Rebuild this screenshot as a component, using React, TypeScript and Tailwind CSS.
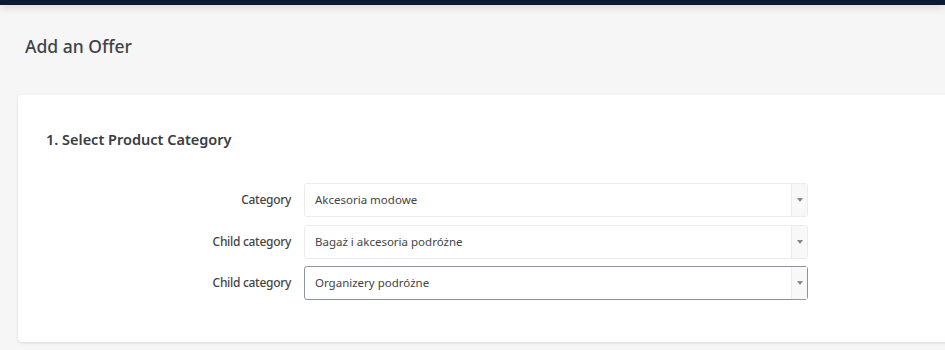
type Row = { label: string; value: string; active?: boolean };

const rows: Row[] = [
  { label: "Category", value: "Akcesoria modowe" },
  { label: "Child category", value: "Bagaż i akcesoria podróżne" },
  { label: "Child category", value: "Organizery podróżne", active: true },
];

function SelectBox({ value, active }: { value: string; active?: boolean }) {
  return (
    <div
      className={`flex h-[34px] w-[504px] items-stretch rounded-[3px] border bg-white ${
        active ? "border-[#8a94a3]" : "border-[#ececec]"
      }`}
    >
      <div className="flex flex-1 items-center pl-[10px] text-[11.5px] text-[#444]">{value}</div>
      <div className="flex w-[16px] items-center justify-center border-l border-[#ececec] bg-[#f8f8f8]">
        <svg width="6" height="4" viewBox="0 0 6 4">
          <path d="M0 0h6L3 4z" fill="#888" />
        </svg>
      </div>
    </div>
  );
}

export default function App() {
  return (
    <div
      className="min-h-[350px] w-full overflow-hidden bg-[#f6f6f6]"
      style={{ fontFamily: '"Noto Sans", "Open Sans", sans-serif' }}
    >
      <div className="h-[5px] bg-[#0b1a33] shadow-[0_2px_8px_rgba(0,0,0,0.18)]" />
      <div className="px-[25px] pt-[29px] pb-[37px]">
        <h1 className="text-[17.5px] font-medium leading-[24px] text-[#3f4347]">Add an Offer</h1>
      </div>
      <div className="ml-[18px] mr-[-10px] h-[247px] rounded-[4px] bg-white shadow-[0_1px_3px_rgba(0,0,0,0.12)]">
        <h2 className="pl-[28px] pt-[34px] text-[14.5px] font-semibold leading-[20px] text-[#3a3d40]">
          1. Select Product Category
        </h2>
        <div className="mt-[34px] flex flex-col gap-[7.5px]">
          {rows.map((r, i) => (
            <div key={i} className="flex items-center">
              <div className="w-[286px] pr-[13px] text-right text-[12px] font-medium tracking-[-0.3px] text-[#444]">
                {r.label}
              </div>
              <SelectBox value={r.value} active={r.active} />
            </div>
          ))}
        </div>
      </div>
    </div>
  );
}
